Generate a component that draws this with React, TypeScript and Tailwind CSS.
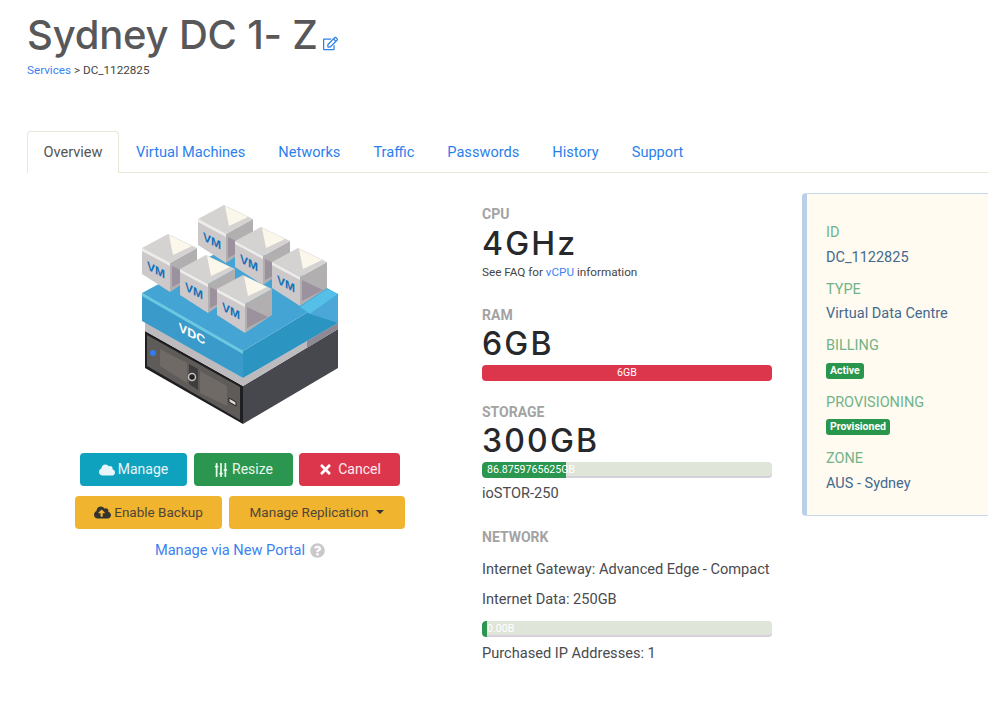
import React from "react";
import {
    FaCloud,
    FaSlidersH,
    FaTimes,
    FaCloudUploadAlt,
    FaRegEdit,
    FaQuestionCircle,
} from "react-icons/fa";

const tabs = ["Virtual Machines", "Networks", "Traffic", "Passwords", "History", "Support"];

// left corner of each cube, back to front, in image pixels
const cubes = [
    [56, 23],
    [0, 52],
    [93, 45],
    [130, 66],
    [38, 73],
    [75, 93],
];

const Cube = ({ x, y }: { x: number; y: number }) => (
    <g transform={`translate(${x} ${y})`}>
        <polygon points="0,0 28,15 28,44 0,26" fill="#cdc9cb" />
        <polygon points="28,15 55,0 55,26 28,44" fill="#b2afb1" />
        <polygon points="30,18 51,28 30,39" fill="#9b929e" />
        <polygon points="0,0 26,-14 55,0 28,15" fill="#d5d2d2" />
        <polygon points="27,-13 50,-2 31,7" fill="#fbf7ea" />
        <polygon points="0,0 28,15 28,18 0,3" fill="#eeece8" />
        <text
            transform="translate(14 26) skewY(28)"
            textAnchor="middle"
            className="fill-[#1470b8] font-['Liberation_Sans',sans-serif] text-[12px] font-bold"
        >
            VM
        </text>
    </g>
);

const Datacentre = () => (
    <svg width="197" height="232" viewBox="0 0 197 232" role="img" aria-label="Virtual data centre">
        {/* server */}
        <polygon points="101,190 196,133 196,172 101,228" fill="#47474e" />
        <polygon points="3,135 101,190 101,228 3,172" fill="#1f1f22" />
        <polygon points="5,139 98,191 98,224 5,170" fill="#5e5b59" />
        <polygon points="18,153 45,167 45,187 18,170" fill="#6f6a66" />
        <polygon points="58,175 85,190 85,210 58,197" fill="#6f6a66" />
        <polygon points="47,168 56,173 56,194 47,188" fill="#3e3c3c" />
        <circle cx="11" cy="157" r="3" fill="#2f7df0" />
        <circle cx="50" cy="181" r="3.5" fill="#222" stroke="#c4c4c4" strokeWidth="1.5" />
        <polygon points="87,202 94,206 94,210 87,206" fill="#d5d5d5" stroke="#222" strokeWidth="1" />
        <polygon points="3,125 101,182 196,127 196,133 101,190 3,135" fill="#bdbbbd" />
        <polygon points="165,145 196,127 196,133 165,152" fill="#8f8895" />
        {/* vdc slab */}
        <polygon points="0,97 101,155 101,182 0,125" fill="#3a9bcb" />
        <polygon points="101,155 196,98 196,127 101,182" fill="#2c94c0" />
        <polygon points="168,118 196,98 196,127" fill="#4aa7d8" />
        <polygon points="0,97 97,45 196,98 101,155" fill="#44a4d4" />
        <polygon points="158,111 185,93 196,98 168,118" fill="#55bfe8" />
        <polygon points="0,97 101,155 101,158 0,100" fill="#6cc9e2" />
        <text
            transform="translate(50 142) skewY(28)"
            textAnchor="middle"
            className="fill-white font-['Liberation_Sans',sans-serif] text-[12.5px] font-bold"
        >
            VDC
        </text>
        {cubes.map(([x, y]) => (
            <Cube key={`${x}-${y}`} x={x} y={y} />
        ))}
    </svg>
);

const Btn = ({ className, children }: { className: string; children: React.ReactNode }) => (
    <button className={`flex h-[33px] items-center justify-center rounded-[4px] ${className}`}>
        {children}
    </button>
);

const Bar = ({ pct, label }: { pct: number; label: string }) => (
    <div className="relative h-[16px] w-[290px] overflow-hidden rounded-[4px] bg-[#dfe5d8] shadow-[inset_0_-2px_0_#d6d0da]">
        <div className="h-full rounded-l-[4px] bg-[#2a964f]" style={{ width: `${pct}%` }} />
        <span className="absolute left-[5px] top-0 whitespace-nowrap text-[10.6px] leading-[15px] text-white">
            {label}
        </span>
    </div>
);

const Label = ({ className, children }: { className: string; children: React.ReactNode }) => (
    <div className={`text-[14px] font-bold leading-[17px] text-[#a3a3a3] ${className}`}>{children}</div>
);

const Big = ({ className, children }: { className: string; children: React.ReactNode }) => (
    <div className={`font-['Inter',sans-serif] text-[32px] font-medium leading-[36px] tracking-[2.2px] text-[#26282b] ${className}`}>
        {children}
    </div>
);

const Info = ({ label, children }: { label: string; children: React.ReactNode }) => (
    <div className="mb-[6.5px]">
        <div className="text-[14.5px] leading-[25px] text-[#72b388]">{label}</div>
        <div className="flex h-[25px] items-center text-[14.5px] text-[#44698f]">{children}</div>
    </div>
);

const Badge = ({ children }: { children: React.ReactNode }) => (
    <span className="rounded-[3px] bg-[#28964c] px-[4px] text-[10.5px] font-bold leading-[16px] text-white">
        {children}
    </span>
);

export default function App() {
    return (
        <div className="h-[723px] w-[1000px] overflow-hidden bg-white pl-[27px] pr-[12px] font-['Roboto',sans-serif] text-[#4a4a4f]">
            <div className="flex h-[61px] items-end pb-[3px]">
                <h1 className="font-['Inter',sans-serif] text-[40px] font-medium leading-[46px] tracking-[-0.2px] text-[#58585a]">
                    Sydney DC 1- Z
                </h1>
                <FaRegEdit className="mb-[7px] ml-[5px] text-[15px] text-[#2d7fe8]" />
            </div>
            <div className="mt-[2px] text-[11.7px] leading-[14px] text-[#444]">
                <span className="text-[#3b82f6]">Services</span> &gt; DC_1122825
            </div>

            <nav className="mt-[54px] flex h-[42px] border-b border-[#e9e7d9] text-[14.6px]">
                <div className="flex h-[42px] w-[92px] items-center justify-center rounded-t-[4px] border border-b-0 border-[#e9e7d9] bg-white text-[#555]">
                    Overview
                </div>
                <div className="ml-[17px] flex gap-[33px] pt-[12px] leading-[18px] text-[#2b7fec]">
                    {tabs.map((t) => (
                        <span key={t}>{t}</span>
                    ))}
                </div>
            </nav>

            <div className="mt-[20px] flex">
                <div className="flex w-[426px] flex-col items-center">
                    <div className="h-[237px] pl-[1px] pt-[3px]">
                        <Datacentre />
                    </div>
                    <div className="mt-[23px] flex text-[14px]">
                        <Btn className="w-[107px] gap-[3px] bg-[#0fa2bf] text-[#e8f6f9]">
                            <FaCloud className="text-[16px]" /> Manage
                        </Btn>
                        <Btn className="ml-[7px] w-[99px] gap-[4px] bg-[#2a964f] text-[#e8f6ec]">
                            <FaSlidersH className="rotate-90 text-[14px]" /> Resize
                        </Btn>
                        <Btn className="ml-[6px] w-[101px] gap-[5px] bg-[#dc364c] text-[#fdecee]">
                            <FaTimes className="text-[15px] text-white" /> Cancel
                        </Btn>
                    </div>
                    <div className="mt-[10px] flex gap-[7px] text-[13.5px] text-[#50453a]">
                        <Btn className="w-[147px] gap-[3px] bg-[#f0b42e]">
                            <FaCloudUploadAlt className="text-[17px] text-[#333]" /> Enable Backup
                        </Btn>
                        <Btn className="w-[176px] gap-[8px] bg-[#f0b42e]">
                            Manage Replication
                            <span className="mt-[-1px] h-0 w-0 border-x-[4px] border-t-[4px] border-x-transparent border-t-[#333]" />
                        </Btn>
                    </div>
                    <div className="mt-[12px] flex items-center gap-[5px] text-[14.6px] leading-[18px] text-[#3b82f0]">
                        Manage via New Portal
                        <FaQuestionCircle className="text-[15px] text-[#c9c9c9]" />
                    </div>
                </div>

                <div className="ml-[29px] w-[290px] pt-[13px] text-[14.6px] leading-[18px]">
                    <Label className="">CPU</Label>
                    <Big className="mt-[3px]">4GHz</Big>
                    <div className="mt-[3px] text-[11.7px] leading-[14px] text-[#444]">
                        See FAQ for <span className="text-[#3b82f6]">vCPU</span> information
                    </div>
                    <Label className="mt-[27.5px]">RAM</Label>
                    <Big className="mt-[2px]">6GB</Big>
                    <div className="mt-[3px] h-[16px] rounded-[4px] bg-[#dc364c] text-center text-[10.6px] leading-[16px] text-white">
                        6GB
                    </div>
                    <Label className="mt-[23.5px]">STORAGE</Label>
                    <Big className="mt-[1.5px]">300GB</Big>
                    <div className="mt-[3px]">
                        <Bar pct={29} label="86.8759765625GB" />
                    </div>
                    <div className="mt-[6px]">ioSTOR-250</div>
                    <Label className="mt-[27.5px]">NETWORK</Label>
                    <div className="mt-[13.5px] whitespace-nowrap">Internet Gateway: Advanced Edge - Compact</div>
                    <div className="mt-[12px]">Internet Data: 250GB</div>
                    <div className="mt-[13px]">
                        <Bar pct={1.7} label="0.00B" />
                    </div>
                    <div className="mt-[7px]">Purchased IP Addresses: 1</div>
                </div>

                <div className="ml-[30px] h-[323px] w-[186px] rounded-l-[4px] border-y border-l-[5px] border-y-[#c5d7ea] border-l-[#b9d0e8] bg-[#fffbf0] pl-[19px] pt-[26px]">
                    <Info label="ID">DC_1122825</Info>
                    <Info label="TYPE">Virtual Data Centre</Info>
                    <Info label="BILLING">
                        <Badge>Active</Badge>
                    </Info>
                    <Info label="PROVISIONING">
                        <Badge>Provisioned</Badge>
                    </Info>
                    <Info label="ZONE">AUS - Sydney</Info>
                </div>
            </div>
        </div>
    );
}
